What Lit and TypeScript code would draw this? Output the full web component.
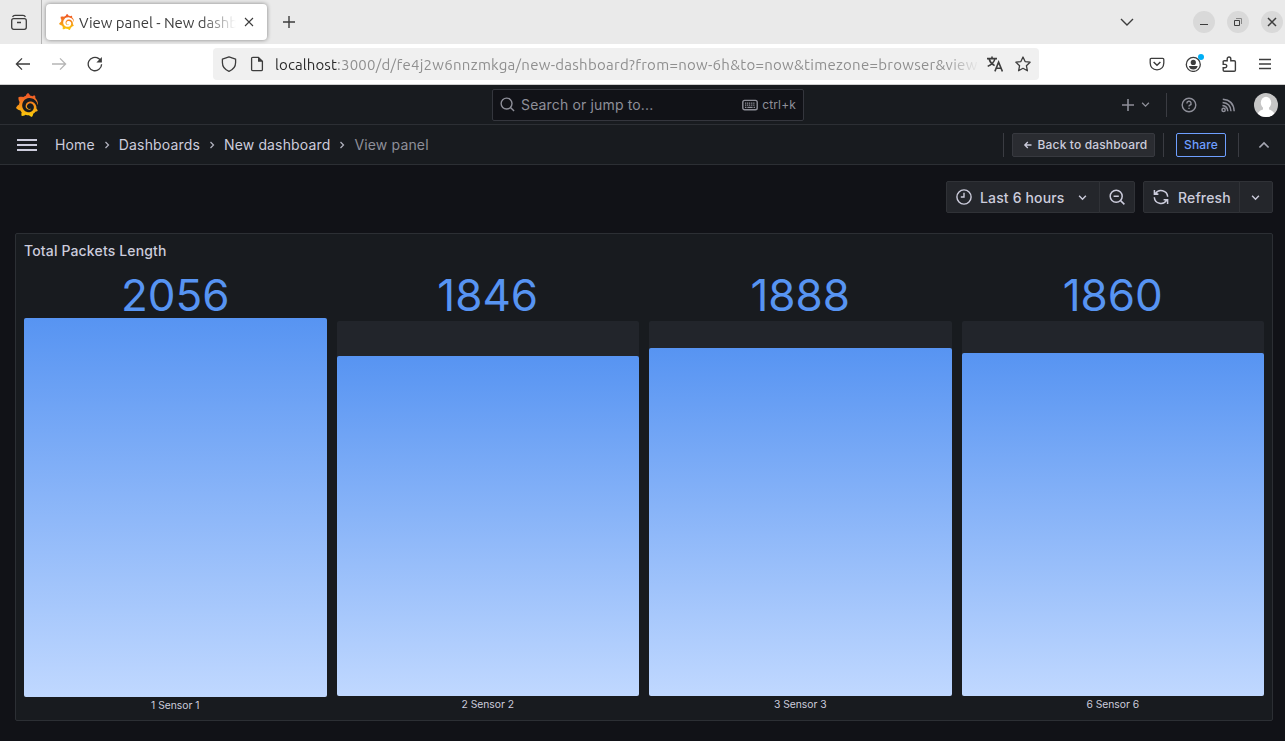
import { LitElement, html, svg, css } from "lit";
import { customElement } from "lit/decorators.js";

const LOGO =
  "M23.02 10.59a8.578 8.578 0 0 0-.862-3.034 8.911 8.911 0 0 0-1.789-2.445c.337-1.342-.413-2.505-.413-2.505-1.292-.08-2.113.4-2.416.62-.052-.02-.102-.044-.154-.064-.22-.089-.446-.172-.677-.247-.231-.073-.47-.14-.711-.197a9.867 9.867 0 0 0-.875-.161C14.557.753 12.94 0 12.94 0c-1.804 1.145-2.147 2.744-2.147 2.744l-.018.093c-.098.029-.2.057-.298.088-.138.042-.275.094-.413.143-.138.055-.275.107-.41.166a8.869 8.869 0 0 0-1.557.87l-.063-.029c-2.497-.955-4.716.195-4.716.195-.203 2.658.996 4.33 1.235 4.636a11.608 11.608 0 0 0-.607 2.635C1.636 12.677.953 15.014.953 15.014c1.926 2.214 4.171 2.351 4.171 2.351.003-.002.006-.002.006-.005.285.509.615.994.986 1.446.156.19.32.371.488.548-.704 2.009.099 3.68.099 3.68 2.144.08 3.553-.937 3.849-1.173a9.784 9.784 0 0 0 3.164.501h.08l.055-.003.107-.002.103-.005.003.002c1.01 1.44 2.788 1.646 2.788 1.646 1.264-1.332 1.337-2.653 1.337-2.94v-.058c0-.02-.003-.039-.003-.06.265-.187.52-.387.758-.6a7.875 7.875 0 0 0 1.415-1.7c1.43.083 2.437-.885 2.437-.885-.236-1.49-1.085-2.216-1.264-2.354l-.018-.013-.016-.013a.217.217 0 0 1-.031-.02c.008-.092.016-.18.02-.27.011-.162.016-.323.016-.48v-.253l-.005-.098-.008-.135a1.891 1.891 0 0 0-.01-.13c-.003-.042-.008-.083-.013-.125l-.016-.124-.018-.122a6.215 6.215 0 0 0-2.032-3.73 6.015 6.015 0 0 0-3.222-1.46 6.292 6.292 0 0 0-.85-.048l-.107.002h-.063l-.044.003-.104.008a4.777 4.777 0 0 0-3.335 1.695c-.332.4-.592.84-.768 1.297a4.594 4.594 0 0 0-.312 1.817l.003.091c.005.055.007.11.013.164a3.615 3.615 0 0 0 .698 1.82 3.53 3.53 0 0 0 1.827 1.282c.33.098.66.14.971.137.039 0 .078 0 .114-.002l.063-.003c.02 0 .041-.003.062-.003.034-.002.065-.007.099-.01.007 0 .018-.003.028-.003l.031-.005.06-.008a1.18 1.18 0 0 0 .112-.02c.036-.008.072-.013.109-.024a2.634 2.634 0 0 0 .914-.415c.028-.02.056-.041.085-.065a.248.248 0 0 0 .039-.35.244.244 0 0 0-.309-.06l-.078.042c-.09.044-.184.083-.283.116a2.476 2.476 0 0 1-.475.096c-.028.003-.054.006-.083.006l-.083.002c-.026 0-.054 0-.08-.002l-.102-.006h-.012l-.024.006c-.016-.003-.031-.003-.044-.006-.031-.002-.06-.007-.091-.01a2.59 2.59 0 0 1-.724-.213 2.557 2.557 0 0 1-.667-.438 2.52 2.52 0 0 1-.805-1.475 2.306 2.306 0 0 1-.029-.444l.006-.122v-.023l.002-.031c.003-.021.003-.04.005-.06a3.163 3.163 0 0 1 1.352-2.29 3.12 3.12 0 0 1 .937-.43 2.946 2.946 0 0 1 .776-.101h.06l.07.002.045.003h.026l.07.005a4.041 4.041 0 0 1 1.635.49 3.94 3.94 0 0 1 1.602 1.662 3.77 3.77 0 0 1 .397 1.414l.005.076.003.075c.002.026.002.05.002.075 0 .024.003.052 0 .07v.065l-.002.073-.008.174a6.195 6.195 0 0 1-.08.639 5.1 5.1 0 0 1-.267.927 5.31 5.31 0 0 1-.624 1.13 5.052 5.052 0 0 1-3.237 2.014 4.82 4.82 0 0 1-.649.066l-.039.003h-.287a6.607 6.607 0 0 1-1.716-.265 6.776 6.776 0 0 1-3.4-2.274 6.75 6.75 0 0 1-.746-1.15 6.616 6.616 0 0 1-.714-2.596l-.005-.083-.002-.02v-.056l-.003-.073v-.096l-.003-.104v-.07l.003-.163c.008-.22.026-.45.054-.678a8.707 8.707 0 0 1 .28-1.355c.128-.444.286-.872.473-1.277a7.04 7.04 0 0 1 1.456-2.1 5.925 5.925 0 0 1 .953-.763c.169-.111.343-.213.524-.306.089-.05.182-.091.273-.135.047-.02.093-.042.138-.062a7.177 7.177 0 0 1 .714-.267l.145-.045c.049-.015.098-.026.148-.041.098-.029.197-.052.296-.076.049-.013.1-.02.15-.033l.15-.032.151-.028.076-.013.075-.01.153-.024c.057-.01.114-.013.171-.023l.169-.021c.036-.003.073-.008.106-.01l.073-.008.036-.003.042-.002c.057-.003.114-.008.171-.01l.086-.006h.023l.037-.003.145-.007a7.999 7.999 0 0 1 1.708.125 7.917 7.917 0 0 1 2.048.68 8.253 8.253 0 0 1 1.672 1.09l.09.077.089.078c.06.052.114.107.171.159.057.052.112.106.166.16.052.055.107.107.159.164a8.671 8.671 0 0 1 1.41 1.978c.012.026.028.052.04.078l.04.078.075.156c.023.051.05.1.07.153l.065.15a8.848 8.848 0 0 1 .45 1.34.19.19 0 0 0 .201.142.186.186 0 0 0 .172-.184c.01-.246.002-.532-.024-.856z";

// Every glyph is drawn on a 16 x 16 grid with a stroke in the current colour.
const GLYPHS: Record<string, unknown> = {
  recent: svg`<rect x=".7" y="4.7" width="14.6" height="10.6" rx="2"/><path d="M1.6 2.9Q2.2 1.4 4 1.3H12Q13.8 1.4 14.4 2.9M6 8.5H10"/>`,
  close: svg`<path d="M4 4 12 12M12 4 4 12"/>`,
  plus: svg`<path d="M8 2V14M2 8H14"/>`,
  down: svg`<path d="M2 5 8 11 14 5"/>`,
  back: svg`<path d="M15 8H1.6M7 2.4 1.4 8 7 13.6"/>`,
  forward: svg`<path d="M1 8H14.4M9 2.4 14.6 8 9 13.6"/>`,
  reload: svg`<path d="M14.6 8.2A6.7 6.7 0 1 1 11.8 2.6L13 3.7"/><path d="M14.9 1V6.4H9.4Z" fill="currentColor" stroke="none"/>`,
  shield: svg`<path d="M8 .8 14.6 3.1V6.6C14.6 10.5 12 13.8 8 15.4 4 13.8 1.4 10.5 1.4 6.6V3.1Z" stroke-linejoin="round"/>`,
  page: svg`<path d="M3.8 1.3H9.4L13.4 5.3V13.4Q13.4 14.6 12.2 14.6H3.8Q2.6 14.6 2.6 13.4V2.5Q2.6 1.3 3.8 1.3Z"/><path d="M9 1V5.7H13.6Z" fill="currentColor" stroke="none"/>`,
  translate: svg`<path d="M0 2.6H10M5 .4V2.6M8 2.6C7.2 6 4.5 8.6 .7 10.4M2.2 3.2C3 6 5 8.2 7.6 9.6M7.9 15.4 11.6 6.2 15.4 15.4M9.2 12.2H14" stroke-width="1.6"/>`,
  star: svg`<path d="M8 1 10.1 5.6 15.1 6.2 11.4 9.7 12.4 14.8 8 12.3 3.6 14.8 4.6 9.7 .9 6.2 5.9 5.6Z" stroke-linejoin="round"/>`,
  pocket: svg`<path d="M2.3 2.4H13.7Q14.8 2.4 14.8 3.6V7Q14.6 13.4 8 13.8 1.4 13.4 1.2 7V3.6Q1.2 2.4 2.3 2.4Z"/><path d="M4.6 6 8 9.2 11.4 6" stroke-width="1.5"/>`,
  account: svg`<circle cx="8.3" cy="8.4" r="7"/><circle cx="8.3" cy="6.4" r="2.6" fill="currentColor" stroke="none"/><path d="M3.9 9.9H12.7Q11.9 13.4 8.3 13.4 4.7 13.4 3.9 9.9Z" fill="currentColor" stroke="none"/>`,
  puzzle: svg`<path d="M2.4 4.8H6.2V2.9C6.2 .3 9.8 .3 9.8 2.9V4.8H13.2Q14.4 4.8 14.4 6V14.2Q14.4 15.3 13.2 15.3H3.4Q2.2 15.3 2.2 14.2V11.8H4C6.4 11.8 6.4 8.4 4 8.4H2.2V4.8"/>`,
  menu: svg`<path d="M2 3.5H14M2 8H14M2 12.5H14"/>`,
  search: svg`<circle cx="7" cy="7" r="5.8"/><path d="M11.2 11.2 15 15"/>`,
  keyboard: svg`<rect x=".8" y="3.4" width="14.4" height="9.4" rx="1.8"/><path d="M3 6.1H13M3 8.1H13" stroke-dasharray="1.2 .7"/><path d="M3 10.4H4.4M5.4 10.4H10.6M11.6 10.4H13"/>`,
  help: svg`<circle cx="8" cy="8" r="6.8"/><path d="M5.9 6.5A2.1 2.1 0 1 1 8.9 8.2Q8 8.6 8 9.5M8 10.8V12"/>`,
  rss: svg`<circle cx="3.6" cy="12.9" r="1.6"/><path d="M2.4 8.6Q7.4 9 7.8 14.2M2.6 5.4Q10.6 6 11 14.2M2.8 2.2Q13.6 3 14.2 14.2"/>`,
  clock: svg`<circle cx="8" cy="8" r="7.1"/><path d="M8 3.8V8H4.8"/>`,
  zoomout: svg`<circle cx="7.2" cy="7.2" r="6"/><path d="M4.6 7.2H9.8M11.6 11.6 15.4 15.4"/>`,
  sync: svg`<path d="M2 5.1H5.3M1.4 1.1V5.3H5.4M2.3 4.8A6.7 6.7 0 0 1 14.7 7.8M14.6 14.9V10.8H10.6M13.7 11.2A6.7 6.7 0 0 1 1.3 8.2"/>`,
  right: svg`<path d="M6 4 10 8 6 12"/>`,
  up: svg`<path d="M3.4 10.5 8 5.9 12.6 10.5"/>`,
};

const icon = (name: string, size = 16, stroke = 1.3) => html`<svg
  class="icon" width=${size} height=${size} viewBox="0 0 16 16" fill="none"
  stroke="currentColor" stroke-width=${stroke}>${GLYPHS[name]}</svg>`;

const logo = (width: number, height: number) => html`<svg
  class="icon" width=${width} height=${height} viewBox="0.9 0 22.2 24" preserveAspectRatio="none">
  <defs><linearGradient id="flame" x1="0" y1="0" x2="0" y2="1">
    <stop offset=".1" stop-color="#f05a28"/><stop offset=".95" stop-color="#fbca0a"/>
  </linearGradient></defs>
  <path d=${LOGO} fill="url(#flame)"/></svg>`;

@customElement("browser-chrome")
class BrowserChrome extends LitElement {
  static styles = css`
    :host { display: block; font: 15px "Ubuntu", "Noto Sans", sans-serif; color: #3d3d3d; }
    .icon { display: block; flex: none; }
    .tabs { display: flex; align-items: center; height: 44px; background: #eaeaea; }
    .recent { width: 42px; height: 44px; padding-left: 11px; box-sizing: border-box; display: flex; align-items: center; border-right: 1px solid #b4b4b4; }
    .tab { display: flex; align-items: center; width: 221px; height: 36px; margin-left: 4px; padding: 0 10px 0 13px; box-sizing: border-box; background: #fff; border-radius: 4px; box-shadow: 0 0 4px rgba(0,0,0,.45); }
    .title { width: 157px; margin-left: 5px; white-space: nowrap; letter-spacing: -.04px; -webkit-mask-image: linear-gradient(90deg, #000 78%, transparent); }
    .shut { margin-left: 5px; }
    .add { margin-left: 14px; }
    .list { margin-left: auto; margin-right: 58px; }
    .windows { display: flex; gap: 12px; padding-right: 2px; }
    .round { width: 22px; height: 22px; border-radius: 50%; background: #d9d9d9; display: flex; align-items: center; justify-content: center; }
    .bar { display: flex; align-items: center; height: 40px; padding: 0 2px 0 5px; background: #fff; border-bottom: 1px solid #cfcfcf; }
    .cell { position: relative; width: 36px; display: flex; justify-content: center; flex: none; }
    .faded { color: #b5b5b5; }
    .url { display: flex; align-items: center; width: 826px; height: 32px; margin-left: 100px; padding: 0 8px; box-sizing: border-box; background: #f0f0f0; border-radius: 4px; }
    .page { margin-left: 12px; }
    .address { flex: 1; min-width: 0; margin: 0 7px 0 10px; white-space: nowrap; letter-spacing: .28px; color: #8f8f8f; -webkit-mask-image: linear-gradient(90deg, #000 95%, transparent); }
    .host { color: #2b2b2b; letter-spacing: .1px; }
    .star { margin-left: 12px; }
    .tools { display: flex; margin-left: auto; }
    .dot { position: absolute; right: 7px; top: -2px; width: 6px; height: 6px; border-radius: 50%; background: #00aef5; }
  `;

  render() {
    return html`
      <div class="tabs">
        <div class="recent">${icon("recent")}</div>
        <div class="tab">
          ${logo(15, 16)}<div class="title">View panel - New dashb</div>
          <div class="shut">${icon("close", 16, 1.1)}</div>
        </div>
        <div class="add">${icon("plus", 16, 1.4)}</div>
        <div class="list">${icon("down", 16, 1.4)}</div>
        <div class="windows">
          <div class="round"><svg width="10" height="10" fill="none" stroke="#3d3d3d"><path d="M1 7.5H9"/></svg></div>
          <div class="round"><svg width="8" height="8" fill="none" stroke="#3d3d3d"><path d="M.5 2.5H5.5V7.5H.5Z"/><path d="M2 .5H7.5V6" stroke="#888"/></svg></div>
          <div class="round">${icon("close", 16, 1.5)}</div>
        </div>
      </div>
      <div class="bar">
        <div class="cell">${icon("back")}</div>
        <div class="cell faded">${icon("forward")}</div>
        <div class="cell">${icon("reload")}</div>
        <div class="url">
          ${icon("shield")}
          <div class="page">${icon("page")}</div>
          <div class="address"><span class="host">localhost</span>:3000/d/fe4j2w6nnzmkga/new-dashboard?from=now-6h&amp;to=now&amp;timezone=browser&amp;view</div>
          ${icon("translate")}
          <div class="star">${icon("star")}</div>
        </div>
        <div class="tools">
          <div class="cell">${icon("pocket")}</div>
          <div class="cell">${icon("account")}<span class="dot"></span></div>
          <div class="cell">${icon("puzzle", 16, 1.4)}</div>
          <div class="cell">${icon("menu", 16, 1.3)}</div>
        </div>
      </div>
    `;
  }
}

interface Bar {
  value: number;
  label: string;
  height: number;
  full?: boolean;
}

@customElement("app-root")
class AppRoot extends LitElement {
  static styles = css`
    :host { display: block; width: 1285px; height: 741px; overflow: hidden; background: #111217; color: #ccccdc; font: 14px/22px "Inter", sans-serif; letter-spacing: .15px; }
    .icon { display: block; flex: none; }
    .row { display: flex; align-items: center; height: 39px; background: #181b1f; border-bottom: 1px solid #2c2f34; }
    .top { justify-content: space-between; color: #8e8f99; }
    .side { width: 476px; display: flex; align-items: center; }
    .brand { padding-left: 16px; }
    .right { justify-content: flex-end; padding-right: 7px; box-sizing: border-box; width: 481px; }
    .search { display: flex; align-items: center; width: 312px; height: 32px; padding: 0 7px; box-sizing: border-box; background: #111217; border: 1px solid #34363d; border-radius: 2px; }
    .hint { flex: 1; margin-left: 6px; }
    .keys { font-size: 12px; margin-left: 4px; }
    .line { width: 1px; height: 24px; background: #3a3c42; }
    .caret { margin: 0 16px 0 5px; }
    .help { margin: 0 23px 0 14px; }
    .avatar { display: block; margin-left: 18px; }
    .burger { margin: 0 18px 0 17px; display: grid; gap: 3px; width: 20px; }
    .burger span { height: 2px; background: #ccccdc; }
    .sep { width: 24px; display: flex; justify-content: center; color: #b0b1bd; }
    .current { color: #8e8f99; }
    .actions { display: flex; align-items: center; margin-left: auto; padding-right: 13px; }
    .button { display: flex; align-items: center; justify-content: center; height: 24px; box-sizing: border-box; border: 1px solid #37393f; border-radius: 2px; background: #2a2c31; font-size: 12px; font-weight: 500; }
    .return { width: 143px; margin: 0 8px; padding-left: 3px; gap: 5px; }
    .share { width: 50px; margin: 0 12px; background: none; border-color: #6e9fff; color: #6e9fff; }
    .collapse { margin-left: 17px; color: #a6a7b3; }
    .controls { display: flex; justify-content: flex-end; padding: 16px 12px 20px 0; }
    .control { display: flex; align-items: center; height: 32px; box-sizing: border-box; border: 1px solid #303237; background: #24262b; font-weight: 500; }
    .text { padding-top: 1px; }
    .range { width: 154px; padding-left: 9px; border-radius: 2px 0 0 2px; }
    .range .text { margin: 0 13px 0 8px; }
    .zoom { width: 36px; margin-left: -1px; padding-left: 9px; border-radius: 0 2px 2px 0; }
    .refresh { width: 97px; margin-left: 8px; padding-left: 9px; border-radius: 2px 0 0 2px; }
    .refresh .text { margin-left: 9px; }
    .every { width: 34px; margin-left: -1px; padding-left: 11px; border-radius: 0 2px 2px 0; }
    .panel { width: 1258px; height: 488px; margin-left: 15px; box-sizing: border-box; border: 1px solid #2c2f34; border-radius: 2px; background: #181b1f; padding: 0 8px; }
    .heading { height: 39px; padding-top: 6px; box-sizing: border-box; font-weight: 500; }
    .gauges { display: grid; grid-template-columns: repeat(4, 1fr); gap: 10px; }
    .value { height: 48px; color: #5794f2; font-size: 44px; line-height: 45px; text-align: center; letter-spacing: 0; }
    .track { height: 375px; display: flex; align-items: flex-end; background: #22252b; border-radius: 2px; }
    .fill { width: 100%; border-radius: 2px; background: linear-gradient(to top, #c0d8ff, #5794f2); }
    .label { text-align: center; font-size: 10.3px; line-height: 17px; letter-spacing: 0; }
    .full .value { height: 45px; }
    .full .track { height: 379px; }
  `;

  private bars: Bar[] = [
    { value: 2056, label: "1 Sensor 1", height: 379, full: true },
    { value: 1846, label: "2 Sensor 2", height: 340 },
    { value: 1888, label: "3 Sensor 3", height: 348 },
    { value: 1860, label: "6 Sensor 6", height: 343 },
  ];

  render() {
    const sep = html`<span class="sep">${icon("right", 12, 1.7)}</span>`;
    return html`
      <browser-chrome></browser-chrome>
      <header class="row top">
        <div class="side brand">${logo(22, 24)}</div>
        <div class="search">${icon("search", 15, 1.5)}<span class="hint">Search or jump to...</span>${icon("keyboard", 16, 1.4)}<span class="keys">ctrl+k</span></div>
        <div class="side right">
          ${icon("plus", 16, 1.6)}<span class="caret">${icon("down", 9, 2.3)}</span>
          <div class="line"></div>
          <span class="help">${icon("help", 16, 1.4)}</span>${icon("rss", 16, 1.5)}
          <svg class="avatar" width="24" height="24" viewBox="0 0 24 24">
            <defs><clipPath id="disc"><circle cx="12" cy="12" r="12"/></clipPath></defs>
            <g clip-path="url(#disc)"><rect width="24" height="24" fill="#c6c6c6"/><ellipse cx="12" cy="9.8" rx="5.2" ry="6" fill="#fff"/><path d="M3 24Q3 18 9 16.4V14H15V16.4Q21 18 21 24Z" fill="#fff"/></g>
          </svg>
        </div>
      </header>
      <nav class="row">
        <div class="burger"><span></span><span></span><span></span></div>
        <span>Home</span>${sep}<span>Dashboards</span>${sep}<span>New dashboard</span>${sep}<span class="current">View panel</span>
        <div class="actions">
          <div class="line"></div>
          <div class="button return"><svg width="10" height="10" fill="none" stroke="currentColor" stroke-width="1.3"><path d="M8.5 5H2M4.8 2 1.8 5 4.8 8"/></svg>Back to dashboard</div>
          <div class="line"></div>
          <div class="button share">Share</div>
          <div class="line"></div>
          <span class="collapse">${icon("up", 16, 1.7)}</span>
        </div>
      </nav>
      <div class="controls">
        <div class="control range">${icon("clock", 16, 1.4)}<span class="text">Last 6 hours</span>${icon("down", 9, 2.5)}</div>
        <div class="control zoom">${icon("zoomout", 16, 1.5)}</div>
        <div class="control refresh">${icon("sync", 16, 1.5)}<span class="text">Refresh</span></div>
        <div class="control every">${icon("down", 9, 2.5)}</div>
      </div>
      <section class="panel">
        <div class="heading">Total Packets Length</div>
        <div class="gauges">
          ${this.bars.map((b) => html`<div class=${b.full ? "full" : "part"}>
            <div class="value">${b.value}</div>
            <div class="track"><div class="fill" style="height:${b.height}px"></div></div>
            <div class="label">${b.label}</div>
          </div>`)}
        </div>
      </section>
    `;
  }
}
